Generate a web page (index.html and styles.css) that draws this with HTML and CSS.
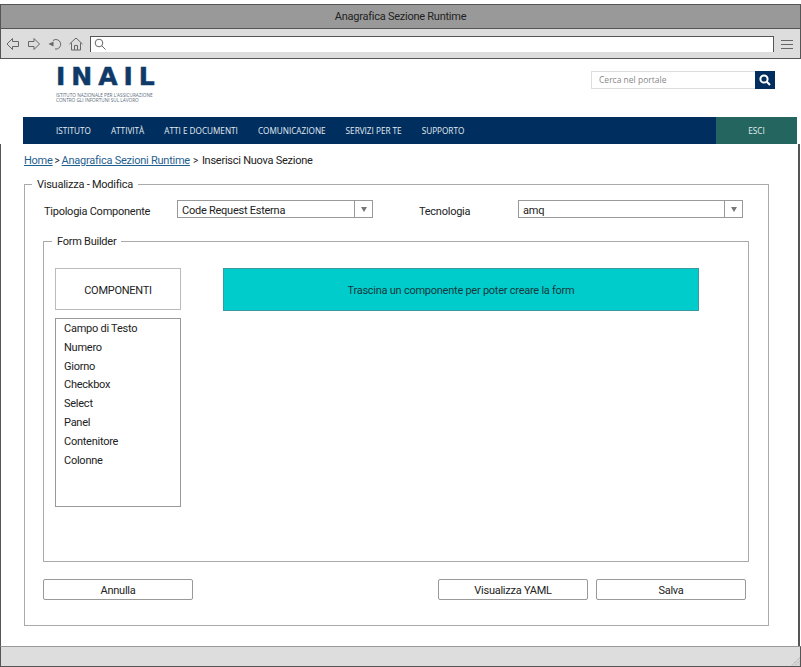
FILE: index.html
```html
<!DOCTYPE html>
<html lang="it">
  <head>
    <meta charset="utf-8">
    <title>Anagrafica Sezione Runtime</title>
    <link rel="stylesheet" href="styles.css">
  </head>
  <body>
    <div class="window">
      <div class="titlebar">Anagrafica Sezione Runtime</div>
      <div class="toolbar">
        <svg class="tool-icon" width="14" height="14" viewBox="0 0 14 14"><path d="M1 7 L6.500 1.500 V4.500 H12.500 V9.500 H6.500 V12.500 Z"/></svg>
        <svg class="tool-icon" width="14" height="14" viewBox="0 0 14 14"><path d="M12.500 7 L7 1.500 V4.500 H1.500 V9.500 H7 V12.500 Z"/></svg>
        <svg class="tool-icon" width="14" height="14" viewBox="0 0 14 14"><path d="M5 3.500 A4.800 4.800 0 1 1 7 12"/><path class="solid" d="M0.500 7 L5.500 4.500 L5.500 9.500 Z"/></svg>
        <svg class="tool-icon" width="14" height="14" viewBox="0 0 14 14"><path d="M0.500 7 L7 1 L13.500 7 M2.500 6 V13 H11.500 V6 M5.500 13 V8.500 H8.500 V13"/></svg>
        <div class="address">
          <svg class="tool-icon" width="12" height="12" viewBox="0 0 12 12"><circle cx="5" cy="5" r="3.800"/><path d="M8 8 L11.500 11.500"/></svg>
        </div>
        <div class="burger"><span></span><span></span><span></span></div>
      </div>

      <div class="site-header">
        <div class="logo">
          <div class="logo-mark">INAIL</div>
          <div class="logo-sub">ISTITUTO NAZIONALE PER L'ASSICURAZIONE<br>CONTRO GLI INFORTUNI SUL LAVORO</div>
        </div>
        <div class="search">
          <span class="search-input">Cerca nel portale</span>
          <span class="search-btn">
            <svg width="12" height="12" viewBox="0 0 12 12"><circle cx="5" cy="5" r="3.600"/><path d="M7.800 7.800 L11 11"/></svg>
          </span>
        </div>
      </div>

      <nav class="nav">
        <ul class="nav-items">
          <li>Istituto</li>
          <li>Attività</li>
          <li>Atti e documenti</li>
          <li>Comunicazione</li>
          <li>Servizi per te</li>
          <li>Supporto</li>
        </ul>
        <div class="nav-exit">ESCI</div>
      </nav>

      <main class="content">
        <div class="breadcrumb">
          <a href="#">Home</a><span class="sep">&gt;</span><a href="#">Anagrafica Sezioni Runtime</a><span class="sep sep-last">&gt;</span><span>Inserisci Nuova Sezione</span>
        </div>

        <fieldset class="box box-outer">
          <legend>Visualizza - Modifica</legend>

          <div class="form-row">
            <label class="label-type">Tipologia Componente</label>
            <div class="select select-type"><span>Code Request Esterna</span><i></i></div>
            <label class="label-tech">Tecnologia</label>
            <div class="select select-tech"><span>amq</span><i></i></div>
          </div>

          <fieldset class="box box-inner">
            <legend>Form Builder</legend>
            <div class="builder">
              <div class="palette">
                <div class="palette-head">COMPONENTI</div>
                <ul class="palette-list">
                  <li>Campo di Testo</li>
                  <li>Numero</li>
                  <li>Giorno</li>
                  <li>Checkbox</li>
                  <li>Select</li>
                  <li>Panel</li>
                  <li>Contenitore</li>
                  <li>Colonne</li>
                </ul>
              </div>
              <div class="dropzone">Trascina un componente per poter creare la form</div>
            </div>
          </fieldset>

          <div class="actions">
            <button class="btn">Annulla</button>
            <div class="actions-right">
              <button class="btn">Visualizza YAML</button>
              <button class="btn">Salva</button>
            </div>
          </div>
        </fieldset>
      </main>

      <div class="statusbar">
        <svg width="9" height="9" viewBox="0 0 9 9"><path d="M8.500 1 L1 8.500 M8.500 4 L4 8.500 M8.500 7 L7 8.500"/></svg>
      </div>
    </div>
  </body>
</html>
```

FILE: styles.css
```css
* { box-sizing: border-box; }
html, body { margin: 0; padding: 0; background: #fff; }
body { font-family: Roboto, "Open Sans", sans-serif; font-size: 11px; letter-spacing: -0.250px; color: #222; }
ul { list-style: none; margin: 0; padding: 0; }

.window {
  width: 801px;
  height: 667px;
  padding-top: 4px;
  display: flex;
  flex-direction: column;
  overflow: hidden;
}

.titlebar {
  height: 25px;
  background: #999;
  border: 1px solid #555;
  display: flex;
  align-items: center;
  justify-content: center;
  color: #222;
}

.toolbar {
  height: 30px;
  background: #ddd;
  border: 1px solid #555;
  border-top: 0;
  display: flex;
  align-items: flex-start;
  padding: 7px 0 0 5px;
  gap: 7px;
}
.tool-icon { fill: none; stroke: #666; stroke-width: 1; flex: none; margin-top: 1px; }
.tool-icon .solid { fill: #666; stroke: none; }
.address {
  flex: none;
  width: 684px;
  height: 16px;
  background: #fff;
  border: 1px solid #555;
  border-bottom: 0;
  padding-left: 3px;
}
.address .tool-icon { margin-top: 1px; }
.burger { display: flex; flex-direction: column; gap: 3px; margin: 4px 0 0 0; width: 12px; }
.burger span { display: block; height: 1px; background: #666; }

.site-header {
  height: 58px;
  margin-left: 1px;
  padding: 8px 26px 0 55px;
  display: flex;
  justify-content: space-between;
  align-items: flex-start;
  letter-spacing: 0;
}
.logo-mark {
  font-family: "DejaVu Sans", sans-serif;
  font-weight: bold;
  font-size: 25px;
  line-height: 20px;
  letter-spacing: 6px;
  color: #0f3a68;
  -webkit-text-stroke: 0.5px #0f3a68;
}
.logo-sub {
  margin-top: 6px;
  font-family: "Open Sans", sans-serif;
  font-size: 4.700px;
  line-height: 4.500px;
  color: #5a6b7c;
  white-space: nowrap;
}

.search { display: flex; width: 184px; height: 18px; margin-top: 4px; }
.search-input {
  flex: 1;
  border: 1px solid #ddd;
  border-right: 0;
  padding-left: 7px;
  font-family: "Open Sans", sans-serif;
  font-size: 8.500px;
  line-height: 15px;
  color: #888;
}
.search-btn { width: 20px; background: #002f5f; display: flex; align-items: center; justify-content: center; }
.search-btn svg { fill: none; stroke: #fff; stroke-width: 2; }

.nav {
  height: 27px;
  margin: 0 4px 0 23px;
  background: #002f5f;
  display: flex;
  justify-content: space-between;
  color: #e4ecf2;
  font-family: "Open Sans", sans-serif;
  font-size: 8.200px;
  letter-spacing: 0;
}
.nav-items { display: flex; gap: 20px; padding-left: 33px; align-items: center; text-transform: uppercase; }
.nav-exit {
  width: 81px;
  background: #24665f;
  display: flex;
  align-items: center;
  justify-content: center;
}

.content {
  flex: 1;
  min-height: 0;
  padding: 8px 0 0 24px;
  border-left: 1px solid #555;
  border-right: 2px solid #555;
  margin-right: 1px;
}

.breadcrumb { height: 16px; padding-top: 1px; line-height: 16px; margin-left: -1px; white-space: nowrap; }
.breadcrumb a { color: #1f5f8f; }
.sep { margin: 0 2px; font-size: 10px; }
.sep-last { margin: 0 4px 0 3px; }

.box { margin: 0; border: 1px solid #aaa; min-width: 0; }
.box legend { padding: 2px 5px 0; line-height: 16px; }

.box-outer {
  width: 745px;
  height: 451px;
  margin-top: 7px;
  margin-left: -1px;
  padding: 0 19px 0 18px;
}
.box-outer > legend { margin-left: -11px; }
.form-row { display: flex; align-items: center; height: 18px; margin-top: 7px; }
.label-type { width: 134px; padding: 5px 0 0 1px; }
.label-tech { width: 99px; margin-left: 46px; padding-top: 5px; }
.select {
  height: 18px;
  border: 1px solid #999;
  display: flex;
  justify-content: space-between;
  align-items: stretch;
}
.select span { padding: 1px 0 0 4px; line-height: 17px; }
.select i {
  width: 18px;
  border-left: 1px solid #999;
  display: flex;
  align-items: center;
  justify-content: center;
}
.select i::after {
  content: "";
  border-top: 5px solid #777;
  border-left: 3px solid transparent;
  border-right: 3px solid transparent;
}
.select-type { width: 196px; }
.select-tech { width: 225px; }

.box-inner {
  width: 706px;
  height: 330px;
  margin-top: 14px;
  padding: 0 11px;
}
.box-inner > legend { margin-left: -3px; }
.builder { display: flex; gap: 42px; margin-top: 18px; }
.palette { width: 126px; flex: none; }
.palette-head {
  height: 42px;
  padding-top: 2px;
  border: 1px solid #bbb;
  display: flex;
  align-items: center;
  justify-content: center;
}
.palette-list {
  height: 189px;
  margin-top: 8px;
  padding: 1px 8px 0;
  border: 1px solid #999;
}
.palette-list li { height: 18.800px; line-height: 18.800px; }
.dropzone {
  width: 476px;
  height: 43px;
  padding-top: 2px;
  background: #0cc;
  border: 1px solid #3a9a9f;
  display: flex;
  align-items: center;
  justify-content: center;
  color: #17393b;
}

.actions { display: flex; justify-content: space-between; margin-top: 17px; width: 703px; }
.actions-right { display: flex; gap: 8px; }
.btn {
  width: 150px;
  height: 21px;
  padding: 2px 0 0;
  background: #fff;
  border: 1px solid #999;
  border-radius: 2px;
  font: inherit;
  letter-spacing: inherit;
  color: inherit;
}

.statusbar {
  flex: none;
  height: 21px;
  background: #ddd;
  border: 1px solid #555;
  border-top-color: #999;
  display: flex;
  justify-content: flex-end;
  align-items: flex-end;
}
.statusbar svg { fill: none; stroke: #888; stroke-width: 1; stroke-dasharray: 1 1; }
```
